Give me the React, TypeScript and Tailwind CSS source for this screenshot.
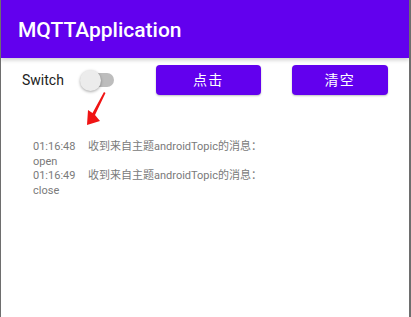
import React, { useState } from 'react';

const logs = [
  { time: '01:16:48', msg: '收到来自主题androidTopic的消息：', payload: 'open' },
  { time: '01:16:49', msg: '收到来自主题androidTopic的消息：', payload: 'close' },
];

const font = "font-['Roboto','Noto_Sans_CJK_SC',sans-serif]";

export default function App() {
  const [on, setOn] = useState(false);

  return (
    <div className={`relative w-[411px] h-[317px] bg-white border-l border-r-2 border-[#6e6e6e] flex flex-col overflow-hidden ${font}`}>
      <div className="h-[58px] shrink-0 bg-[#6200ee] flex items-center pl-[17px] pt-[3px] text-white text-[21px] font-medium shadow-[0_2px_4px_rgba(0,0,0,0.2)] z-10">
        MQTTApplication
      </div>

      <div className="mt-[7px] h-[30px] flex items-center">
        <span className="ml-[21px] text-[14px] text-[#212121]">Switch</span>
        <button
          onClick={() => setOn(!on)}
          className="relative ml-[16px] w-[34px] h-[22px] flex items-center"
        >
          <span className="absolute left-[3px] right-0 h-[14px] rounded-full bg-[#bdbdbd]" />
          <span className="relative w-[21px] h-[21px] rounded-full bg-[#ececec] shadow-[0_1px_3px_rgba(0,0,0,0.35)]" />
        </button>
        <button className="ml-[42px] w-[105px] h-[30px] rounded-[4px] bg-[#6200ee] text-white text-[14px] tracking-[1.25px] shadow-[0_1px_2px_rgba(0,0,0,0.25)]">
          点击
        </button>
        <button className="ml-[31px] w-[96px] h-[30px] rounded-[4px] bg-[#6200ee] text-white text-[14px] tracking-[1.25px] shadow-[0_1px_2px_rgba(0,0,0,0.25)]">
          清空
        </button>
      </div>

      <div className="mt-[45px] pl-[32px] text-[11px] leading-[14.5px] text-[#7a7a7a]">
        {logs.map((l) => (
          <div key={l.time}>
            <div className="flex">
              <span className="w-[55px]">{l.time}</span>
              <span>{l.msg}</span>
            </div>
            <div>{l.payload}</div>
          </div>
        ))}
      </div>

      <svg className="absolute left-[80px] top-[90px]" width="30" height="40" viewBox="0 0 30 40">
        <path d="M23 2 L24.5 3 L14 25 L19 31 L6 35 L7 20 L11.5 23 Z" fill="#f01414" />
      </svg>
    </div>
  );
}
